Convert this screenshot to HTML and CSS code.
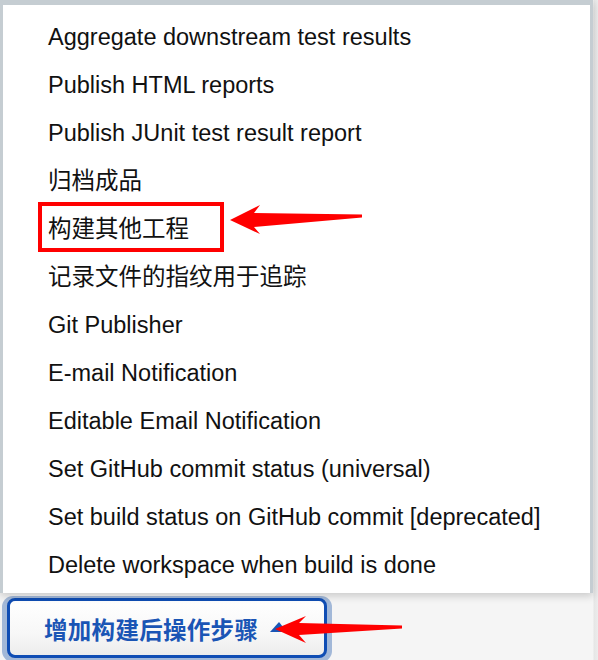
FILE: index.html
```html
<!DOCTYPE html>
<html>
<head>
<meta charset="utf-8">
<link rel="stylesheet" href="styles.css">
</head>
<body>
<div class="page">
  <ul class="menu">
    <li class="item">Aggregate downstream test results</li>
    <li class="item">Publish HTML reports</li>
    <li class="item">Publish JUnit test result report</li>
    <li class="item">归档成品</li>
    <li class="item">构建其他工程</li>
    <li class="item">记录文件的指纹用于追踪</li>
    <li class="item">Git Publisher</li>
    <li class="item">E-mail Notification</li>
    <li class="item">Editable Email Notification</li>
    <li class="item">Set GitHub commit status (universal)</li>
    <li class="item">Set build status on GitHub commit [deprecated]</li>
    <li class="item">Delete workspace when build is done</li>
  </ul>
  <div class="btn-row">
    <div class="btn-glow">
      <div class="btn">增加构建后操作步骤</div>
    </div>
  </div>
  <div class="highlight"></div>
  <svg class="overlay" width="598" height="660" viewBox="0 0 598 660">
    <polygon class="caret" points="270,632 279,622 287,632"/>
    <polygon class="arrow" points="230,220 260,205 254,213 362,214.5 362,217.5 254,227 260,234"/>
    <polygon class="arrow" points="275,629 306,616 299,623 402,625.5 402,628.5 299,635 306,643"/>
  </svg>
</div>
</body>
</html>
```
FILE: styles.css
```css
html, body {
  margin: 0;
  padding: 0;
}
body {
  background: linear-gradient(to bottom, #f4f4f4 0, #f6f6f6 100%);
  font-family: "Liberation Sans", Arial, "Noto Sans CJK SC", sans-serif;
  width: 598px;
  height: 660px;
  overflow: hidden;
}
.page {
  position: relative;
  width: 598px;
  height: 660px;
  background: linear-gradient(to right, #f5f5f5 0, #f5f5f5 593px, #e6e6e6 594px, #ececec 598px);
}
.menu {
  list-style: none;
  margin: 0;
  width: 587px;
  padding: 8px 0 4px 0;
  background: #ffffff;
  border-top: 5px solid #c5cdd2;
  border-left: 3px solid #c5cdd2;
  border-right: 3px solid #c5cdd2;
  box-shadow: 0 3px 8px rgba(0, 0, 0, 0.18);
  position: relative;
  z-index: 1;
}
.item {
  height: 48px;
  line-height: 48px;
  padding-left: 45px;
  font-size: 23.5px;
  color: #111111;
  white-space: nowrap;
}
.btn-row {
  padding: 3px 0 0 2px;
}
.btn-glow {
  display: inline-block;
  padding: 2px 5px 4px 5px;
  background: #a2b8d8;
  border-radius: 11px;
}
.btn {
  width: 280px;
  height: 54px;
  padding-left: 34px;
  border: 3px solid #0f4db4;
  border-radius: 8px;
  background: linear-gradient(to bottom, #ffffff 0, #f7f7f7 60%, #ececec 100%);
  color: #1a55b5;
  font-weight: bold;
  font-size: 23.5px;
  line-height: 56px;
  font-family: "Noto Sans CJK SC", sans-serif;
  letter-spacing: 0.3px;
}
.highlight {
  position: absolute;
  left: 38px;
  top: 202px;
  width: 178px;
  height: 42px;
  border: 4px solid #ff0000;
  z-index: 2;
}
.overlay {
  position: absolute;
  left: 0;
  top: 0;
  z-index: 3;
  pointer-events: none;
}
.arrow {
  fill: #ff0000;
}
.caret {
  fill: #1a55b5;
}
```
